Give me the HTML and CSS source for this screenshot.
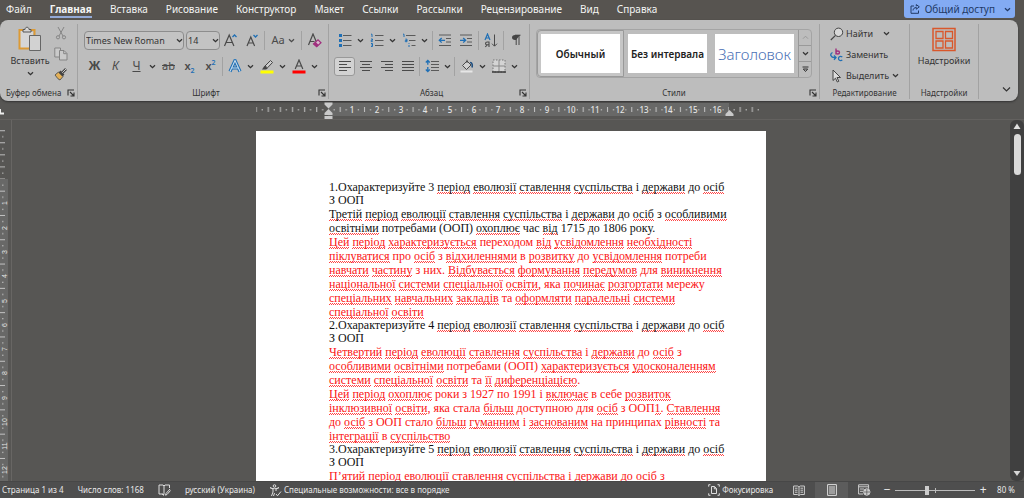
FILE: index.html
```html
<!DOCTYPE html>
<html lang="ru">
<head>
<meta charset="utf-8">
<meta name="viewport" content="width=device-width, initial-scale=1">
<title>Документ</title>
<link rel="stylesheet" href="styles.css">
</head>
<body class="app">
<svg class="defs" aria-hidden="true">
  <symbol id="chev" viewBox="0 0 7 7"><path d="M1 2.2 3.5 4.7 6 2.2" fill="none" stroke="currentColor" stroke-width="1.3"/></symbol>
  <symbol id="launch" viewBox="0 0 8 8"><path d="M1 6.5V1h6M3 3l3.5 3.5M7 3.5V7H3.5" fill="none" stroke="currentColor" stroke-width="1.1"/></symbol>
</svg>

<header class="tabbar">
  <nav class="tabs" aria-label="Вкладки ленты">
    <button class="tab">Файл</button>
    <button class="tab tab-active">Главная</button>
    <button class="tab">Вставка</button>
    <button class="tab">Рисование</button>
    <button class="tab">Конструктор</button>
    <button class="tab">Макет</button>
    <button class="tab">Ссылки</button>
    <button class="tab">Рассылки</button>
    <button class="tab">Рецензирование</button>
    <button class="tab">Вид</button>
    <button class="tab">Справка</button>
  </nav>
  <button class="share">
    <svg width="10" height="10" viewBox="0 0 10 10" fill="none" stroke="currentColor"><path d="M4 2H1v7.3h7.500V6.500M3 6.500C3.200 4.500 4.500 3.500 6.300 3.500V5.200L9.300 2.800 6.300.6v1.700"/></svg>
    <span>Общий доступ</span>
    <svg width="7" height="7"><use href="#chev"/></svg>
  </button>
</header>

<section class="ribbon" aria-label="Лента">
  <div class="group g-clip">
    <div class="clip-body">
      <button class="big">
        <svg width="24" height="26" viewBox="0 0 24 26"><path d="M6 4H1.500v18.500H11" fill="#d9d9d9" stroke="#dc9a35" stroke-width="2"/><path d="M12 4h4.500v5" fill="none" stroke="#dc9a35" stroke-width="2"/><path d="M3 6h12v4h-4v11H3z" fill="#d6d6d6"/><path d="M5 6V3.500h2C7 .5 11 .5 11 3.500h2V6z" fill="#d6d6d6" stroke="#555"/><path d="M11.500 9.500h11v15h-11z" fill="#d2d2d2" stroke="#666"/></svg>
        <span>Вставить</span>
        <svg width="7" height="7"><use href="#chev"/></svg>
      </button>
      <div class="clip-side">
        <button class="ic" aria-label="Вырезать"><svg width="12" height="14" viewBox="0 0 12 14" fill="none" stroke="#858585"><path d="M3 1l5 9M9 1 4 10"/><circle cx="3" cy="11.300" r="1.600"/><circle cx="9" cy="11.300" r="1.600"/></svg></button>
        <button class="ic" aria-label="Копировать"><svg width="14" height="14" viewBox="0 0 14 14" fill="#cacaca" stroke="#858585"><path d="M6 10H.8V1H6.500V3"/><path d="M5.500 3.500h4.500l3 3v6.500H5.500z"/><path d="M9.700 3.700v3h3" fill="none"/></svg></button>
        <button class="ic" aria-label="Формат по образцу"><svg width="14" height="14" viewBox="0 0 14 14"><path d="M1 8 4.500 5l4.500 4.500L6 13 4 11.800z" fill="#e3b058" stroke="#444" stroke-width=".8"/><path d="M5.500 4.500 9.500 8.500M8 6l4-4" stroke="#444" stroke-width="2.600"/><path d="M8.200 5.800 12 2" stroke="#ccc"/></svg></button>
      </div>
    </div>
    <footer class="foot"><span>Буфер обмена</span><button class="launch" aria-label="Параметры буфера обмена"><svg width="8" height="8"><use href="#launch"/></svg></button></footer>
  </div>

  <div class="group g-font">
    <div class="rows">
      <div class="row">
        <label class="combo combo-font"><select aria-label="Шрифт"><option>Times New Roman</option></select><svg width="7" height="7"><use href="#chev"/></svg></label>
        <label class="combo combo-size"><select aria-label="Размер"><option>14</option></select><svg width="7" height="7"><use href="#chev"/></svg></label>
        <button class="ib" aria-label="Увеличить размер"><svg width="16" height="14" viewBox="0 0 16 14" fill="none" stroke="#4a4a4a"><path d="M1.500 13 6.200 2l4.700 11M3 9.500h6.400" stroke-width="1.200"/><path d="M9.500 4 11.500 2l2 2" stroke="#1f6fb5" stroke-width="1.300"/></svg></button>
        <button class="ib" aria-label="Уменьшить размер"><svg width="16" height="14" viewBox="0 0 16 14" fill="none" stroke="#4a4a4a"><path d="M3 13 6.800 4l3.800 9M4.200 10h5.200" stroke-width="1.200"/><path d="M9.500 2 11.500 4l2-2" stroke="#1f6fb5" stroke-width="1.300"/></svg></button>
        <i class="sep"></i>
        <button class="ib wide">Aa<svg width="7" height="7"><use href="#chev"/></svg></button>
        <i class="sep"></i>
        <button class="ib" aria-label="Очистить формат"><svg width="16" height="15" viewBox="0 0 16 15" fill="none"><path d="M1.500 12 6 1l3.200 7.500M3 8.500h4.500" stroke="#4a4a4a" stroke-width="1.200"/><path d="M6.500 11 11 6.800l3 3-4.300 4z" fill="#d8bccd" stroke="#a02f7e" stroke-width="1.200"/><path d="M6.500 11 8.700 8.900l3 3-2 2z" fill="#a02f7e"/></svg></button>
      </div>
      <div class="row">
        <button class="ib bold">Ж</button>
        <button class="ib ital">К</button>
        <button class="ib undl">Ч</button>
        <button class="cv" aria-label="Вид подчёркивания"><svg width="7" height="7"><use href="#chev"/></svg></button>
        <button class="ib strike">ab</button>
        <button class="ib bold2"><span>x<sub>2</sub></span></button>
        <button class="ib bold2"><span>x<sup>2</sup></span></button>
        <i class="sep"></i>
        <button class="ib" aria-label="Текстовые эффекты"><svg width="14" height="14" viewBox="0 0 14 14" fill="none"><path d="M2 12.500 7 1.500l5 11M4.200 9h5.600" stroke="#1f6fb5" stroke-width="3.200"/><path d="M2 12.500 7 1.500l5 11M4.200 9h5.600" stroke="#c8dcec" stroke-width="1.100"/></svg></button>
        <button class="cv" aria-label="Варианты эффектов"><svg width="7" height="7"><use href="#chev"/></svg></button>
        <button class="ib" aria-label="Выделение цветом"><svg width="14" height="15" viewBox="0 0 14 15"><path d="M5 7 10.500 1.500 12.500 3.500 7.500 8.800z" fill="#ccc" stroke="#444"/><path d="M4.500 6.800 7.700 9.500 6 10.500H2z" fill="#444"/><path d="M.5 11.500h13v3H.5z" fill="#ff0"/></svg></button>
        <button class="cv" aria-label="Цвет выделения"><svg width="7" height="7"><use href="#chev"/></svg></button>
        <button class="ib" aria-label="Цвет текста"><svg width="14" height="15" viewBox="0 0 14 15" fill="none"><path d="M3.200 10 7 1l3.800 9M4.500 7h5" stroke="#4a4a4a" stroke-width="1.200"/><path d="M.5 11.500h13v3H.5z" fill="#f00"/></svg></button>
        <button class="cv" aria-label="Варианты цвета текста"><svg width="7" height="7"><use href="#chev"/></svg></button>
      </div>
    </div>
    <footer class="foot"><span>Шрифт</span><button class="launch" aria-label="Параметры шрифта"><svg width="8" height="8"><use href="#launch"/></svg></button></footer>
  </div>

  <div class="group g-para">
    <div class="rows">
      <div class="row">
        <button class="ib" aria-label="Маркеры"><svg width="14" height="14" viewBox="0 0 14 14"><path d="M5 2.500h8.500M5 7.500h8.500M5 12.500h8.500" stroke="#5a5a5a"/><path d="M1 1h3v3H1zM1 6h3v3H1zM1 11h3v3H1z" fill="#1f6fb5"/></svg></button>
        <button class="cv" aria-label="Вид маркеров"><svg width="7" height="7"><use href="#chev"/></svg></button>
        <button class="ib" aria-label="Нумерация"><svg width="14" height="14" viewBox="0 0 14 14" fill="none"><path d="M5 2.500h8.500M5 7.500h8.500M5 12.500h8.500" stroke="#5a5a5a"/><path d="M1 1.200h1V4M1 6h1.500v1.300H1.200v1.300h1.500M1 10.500h1.500v3H1M1.300 12h1" stroke="#1f6fb5"/></svg></button>
        <button class="cv" aria-label="Вид нумерации"><svg width="7" height="7"><use href="#chev"/></svg></button>
        <button class="ib" aria-label="Многоуровневый список"><svg width="14" height="14" viewBox="0 0 14 14" fill="none"><path d="M4 2.500h9.500M7 7.500h6.500M9.500 12.500h4" stroke="#5a5a5a"/><path d="M1 1.200h1V4M3.300 6.200h1.700v2.500H3.300V7.500H5M7 10.200v.8M7 12v2" stroke="#1f6fb5"/></svg></button>
        <button class="cv" aria-label="Вид списка"><svg width="7" height="7"><use href="#chev"/></svg></button>
        <i class="sep"></i>
        <button class="ib" aria-label="Уменьшить отступ"><svg width="14" height="14" viewBox="0 0 14 14" fill="none"><path d="M1 2h12M8 5.500h5M8 9h5M1 12.500h12" stroke="#5a5a5a"/><path d="M7 7.300H1.500M3.700 5 1.300 7.300l2.400 2.300" stroke="#1f6fb5" stroke-width="1.300"/></svg></button>
        <button class="ib" aria-label="Увеличить отступ"><svg width="14" height="14" viewBox="0 0 14 14" fill="none"><path d="M1 2h12M8 5.500h5M8 9h5M1 12.500h12" stroke="#5a5a5a"/><path d="M1 7.300h5.500M4.200 5l2.400 2.300-2.400 2.300" stroke="#1f6fb5" stroke-width="1.300"/></svg></button>
        <i class="sep"></i>
        <button class="ib" aria-label="Сортировка"><svg width="14" height="15" viewBox="0 0 14 15" fill="none"><path d="M1 7 3.500 1 6 7M2 5h3" stroke="#1f6fb5" stroke-width="1.200"/><path d="M5 14V9H3.200C1 9 1 11.800 3.200 11.800H5M3.200 11.800 1.300 14" stroke="#4a4a4a" stroke-width="1.100"/><path d="M10.500 1.500v11.500M8 10.700l2.500 2.500 2.500-2.500" stroke="#4a4a4a"/></svg></button>
        <i class="sep"></i>
        <button class="ib" aria-label="Знаки абзаца"><svg width="10" height="12" viewBox="0 0 10 12"><path d="M9 1H4C0 1 0 6 4 6h1" fill="#444"/><path d="M5.200 1v10M8 1v10M4 1.200h5.500" stroke="#444"/></svg></button>
      </div>
      <div class="row">
        <button class="ib pressed" aria-label="По левому краю"><svg width="12" height="12" viewBox="0 0 12 12" stroke="#4a4a4a"><path d="M0 1.500h12M0 4.500h8M0 7.500h12M0 10.500h8"/></svg></button>
        <button class="ib" aria-label="По центру"><svg width="12" height="12" viewBox="0 0 12 12" stroke="#4a4a4a"><path d="M0 1.500h12M2 4.500h8M0 7.500h12M2 10.500h8"/></svg></button>
        <button class="ib" aria-label="По правому краю"><svg width="12" height="12" viewBox="0 0 12 12" stroke="#4a4a4a"><path d="M0 1.500h12M4 4.500h8M0 7.500h12M4 10.500h8"/></svg></button>
        <button class="ib" aria-label="По ширине"><svg width="12" height="12" viewBox="0 0 12 12" stroke="#4a4a4a"><path d="M0 1.500h12M0 4.500h12M0 7.500h12M0 10.500h12"/></svg></button>
        <i class="sep"></i>
        <button class="ib" aria-label="Интервал"><svg width="14" height="14" viewBox="0 0 14 14" fill="none"><path d="M6 2.500h8M6 5.500h8M6 8.500h8M6 11.500h8" stroke="#5a5a5a"/><path d="M2.800 1.500v4.300M2.800 8v4.500M.8 3.500l2-2 2 2M.8 10.500l2 2 2-2" stroke="#1f6fb5" stroke-width="1.300"/></svg></button>
        <button class="cv" aria-label="Варианты интервала"><svg width="7" height="7"><use href="#chev"/></svg></button>
        <i class="sep"></i>
        <button class="ib" aria-label="Заливка"><svg width="14" height="14" viewBox="0 0 14 14"><path d="M2.500 6.500 7 2l4 4-4.500 4.500z" fill="#d0d0d0" stroke="#4a4a4a"/><path d="M7 4V.8" stroke="#4a4a4a"/><path d="M10 3.500c2.500 0 2.500 3 2 5" fill="none" stroke="#1f4f80" stroke-width="1.600"/><path d="M.5 11.500h12v2H.5z" fill="#e6e6e6"/></svg></button>
        <button class="cv" aria-label="Цвет заливки"><svg width="7" height="7"><use href="#chev"/></svg></button>
        <button class="ib" aria-label="Границы"><svg width="14" height="14" viewBox="0 0 14 14" fill="none"><path d="M1 1h12v12H1z" fill="#d4d4d4" stroke="#777" stroke-dasharray="1.500 1.500"/><path d="M7 1v12M1 7h12" stroke="#888"/><path d="M0 13h14" stroke="#333" stroke-width="1.400"/></svg></button>
        <button class="cv" aria-label="Виды границ"><svg width="7" height="7"><use href="#chev"/></svg></button>
      </div>
    </div>
    <footer class="foot"><span>Абзац</span><button class="launch" aria-label="Параметры абзаца"><svg width="8" height="8"><use href="#launch"/></svg></button></footer>
  </div>

  <div class="group g-style">
    <div class="gallery">
      <button class="style style-on"><span>Обычный</span></button>
      <button class="style"><span>Без интервала</span></button>
      <button class="style style-head"><span>Заголовок</span></button>
      <div class="gal-nav">
        <button aria-label="Вверх" class="nav-off"><svg width="7" height="7" viewBox="0 0 7 7"><path d="M1 4.700 3.500 2.200 6 4.700" fill="none" stroke="currentColor"/></svg></button>
        <button aria-label="Вниз"><svg width="7" height="7"><use href="#chev"/></svg></button>
        <button aria-label="Все стили"><svg width="7" height="7" viewBox="0 0 7 7"><path d="M.5 1h6M1.300 3h4.400L3.500 5.500z" fill="none" stroke="currentColor"/></svg></button>
      </div>
    </div>
    <footer class="foot"><span>Стили</span><button class="launch" aria-label="Панель стилей"><svg width="8" height="8"><use href="#launch"/></svg></button></footer>
  </div>

  <div class="group g-edit">
    <div class="edit">
      <button class="line"><svg width="14" height="14" viewBox="0 0 14 14"><circle cx="8.500" cy="5.300" r="4.200" fill="#d8d8d8" stroke="#444"/><path d="M5.500 8.300.8 13" stroke="#444" stroke-width="1.200"/></svg>Найти<svg class="far" width="7" height="7"><use href="#chev"/></svg></button>
      <button class="line"><svg width="14" height="14" viewBox="0 0 14 14" fill="none"><path d="M6 .5v6M6 4.500C6 2.500 9.500 2.500 9.500 4.500S6 6.500 6 4.500" stroke="#a02f7e" stroke-width="1.400"/><path d="M12.300 8.800C9.500 7.500 8.500 9.300 8.500 10.500s1.300 2.800 3.800 1.700M2.500 4.500C-.5 6 .5 10 5.500 9.500M4 7.500l2 2-2 2.300" stroke="#1f6fb5" stroke-width="1.300"/></svg>Заменить</button>
      <button class="line"><svg width="14" height="14" viewBox="0 0 14 14"><path d="M3 1v10.500l2.500-2.300L7.300 13l1.500-.7L7 8.500h3.500z" fill="#ddd" stroke="#444"/></svg>Выделить<svg class="near" width="7" height="7"><use href="#chev"/></svg></button>
    </div>
    <footer class="foot"><span>Редактирование</span></footer>
  </div>

  <div class="group g-add">
    <button class="big">
      <svg width="24" height="25" viewBox="0 0 24 25" fill="none" stroke="#d9572b"><path d="M1 1.500h22v22H1z" stroke-width="1.500"/><path d="M4 4.500h7v7H4zM13.500 4.500h7v7h-7zM4 14h7v7H4zM13.500 14h7v7h-7z" stroke-width="1.300"/></svg>
      <span>Надстройки</span>
    </button>
    <footer class="foot"><span>Надстройки</span></footer>
  </div>
  <button class="collapse" aria-label="Свернуть ленту"><svg width="9" height="7" viewBox="0 0 9 7"><path d="M1 1.500 4.500 5 8 1.500" fill="none" stroke="currentColor" stroke-width="1.200"/></svg></button>
</section>

<div class="hruler">
  <svg class="corner" width="5" height="8" viewBox="0 0 5 8"><path d="M0 6.500h4M0 2v5" stroke="#eee" stroke-width="2"/></svg>
  <svg class="hscale" width="510" height="18" viewBox="0 0 510 18">
    <defs><pattern id="tk" x="72" width="24.3" height="18" patternUnits="userSpaceOnUse"><path d="M6.100 8v1.500M18.200 8v1.500M12.200 6v5" stroke="#c4c4c4"/></pattern>
    <pattern id="tl" x="-.5" width="12.100" height="18" patternUnits="userSpaceOnUse"><path d="M.7 6v5M6.700 8v1.500" stroke="#c4c4c4"/></pattern></defs>
    <path d="M72 2h401v13H72z" fill="#686867"/>
    <path d="M0 0h68v18H0z" fill="url(#tl)"/><path d="M72 0h401v18H72z" fill="url(#tk)"/><path d="M476 0h30v18h-30z" fill="url(#tl)"/>
    <g class="nums"><text x="96" y="12">1</text><text x="121" y="12">2</text><text x="145" y="12">3</text><text x="169" y="12">4</text><text x="194" y="12">5</text><text x="218" y="12">6</text><text x="242" y="12">7</text><text x="266" y="12">8</text><text x="291" y="12">9</text><text x="315" y="12">10</text><text x="339" y="12">11</text><text x="364" y="12">12</text><text x="388" y="12">13</text><text x="412" y="12">14</text><text x="437" y="12">15</text><text x="461" y="12">16</text></g>
    <path d="M68.500 1.500h8v2l-4 4-4-4zM68.500 14v-2l4-4 4 4v2zM68.500 15h8v3h-8zM469.500 15v-2l4-4 4 4v2z" fill="#c9c9c9"/>
  </svg>
</div>

<main class="work">
  <div class="vruler">
    <svg width="11" height="361" viewBox="0 0 11 361">
      <defs><pattern id="vt" y="59" width="8" height="24.3" patternUnits="userSpaceOnUse"><path d="M2 6.100h1.500M2 18.200h1.500M0 12.200h5" stroke="#c4c4c4"/></pattern>
      <pattern id="vl" y="10" width="8" height="12.100" patternUnits="userSpaceOnUse"><path d="M0 .7h5M2 6.700h1.500" stroke="#c4c4c4"/></pattern></defs>
      <path d="M0 59h8v302H0z" fill="#686867"/>
      <path d="M0 10h8v49H0z" fill="url(#vl)"/><path d="M0 59h8v302H0z" fill="url(#vt)"/>
      <g class="nums vnums"><text transform="translate(7 83) rotate(-90)">1</text><text transform="translate(7 108) rotate(-90)">2</text><text transform="translate(7 132) rotate(-90)">3</text><text transform="translate(7 156) rotate(-90)">4</text><text transform="translate(7 181) rotate(-90)">5</text><text transform="translate(7 205) rotate(-90)">6</text><text transform="translate(7 229) rotate(-90)">7</text><text transform="translate(7 253) rotate(-90)">8</text><text transform="translate(7 278) rotate(-90)">9</text><text transform="translate(7 302) rotate(-90)">10</text><text transform="translate(7 326) rotate(-90)">11</text><text transform="translate(7 350) rotate(-90)">12</text></g>
    </svg>
  </div>
  <div class="canvas">
    <article class="paper" lang="uk">
      <p class="q">1.Охарактеризуйте 3 <u>період</u> <u>еволюзії</u> <u>ставлення</u> <u>суспільства</u> і <u>держави</u> до <u>осіб</u><br>З ООП</p>
      <p><u>Третій</u> <u>період</u> <u>еволюції</u> <u>ставлення</u> <u>суспільства</u> і <u>держави</u> до <u>осіб</u> з <u>особливими</u><br><u>освітніми</u> потребами (ООП) <u>охоплює</u> час <u>від</u> 1715 до 1806 року.</p>
      <p class="red"><u>Цей</u> <u>період</u> <u>характеризується</u> переходом <u>від</u> <u>усвідомлення</u> <u>необхідності</u><br><u>піклуватися</u> про <u>осіб</u> з <u>відхиленнями</u> в <u>розвитку</u> до <u>усвідомлення</u> потреби<br><u>навчати</u> <u>частину</u> з них. <u>Відбувається</u> <u>формування</u> <u>передумов</u> для <u>виникнення</u><br><u>національної</u> <u>системи</u> <u>спеціальної</u> <u>освіти</u>, яка <u>починає</u> <u>розгортати</u> мережу<br><u>спеціальних</u> <u>навчальних</u> <u>закладів</u> та <u>оформляти</u> <u>паралельні</u> <u>системи</u><br><u>спеціальної</u> <u>освіти</u></p>
      <p class="q">2.Охарактеризуйте 4 <u>період</u> <u>еволюзії</u> <u>ставлення</u> <u>суспільства</u> і <u>держави</u> до <u>осіб</u><br>З ООП</p>
      <p class="red"><u>Четвертий</u> <u>період</u> <u>еволюції</u> <u>ставлення</u> <u>суспільства</u> і <u>держави</u> до <u>осіб</u> з<br><u>особливими</u> <u>освітніми</u> потребами (ООП) <u>характеризується</u> <u>удосконаленням</u><br><u>системи</u> <u>спеціальної</u> <u>освіти</u> та <u>її</u> <u>диференціацією</u>.</p>
      <p class="red"><u>Цей</u> <u>період</u> <u>охоплює</u> роки з 1927 по 1991 і <u>включає</u> в себе <u>розвиток</u><br><u>інклюзивної</u> <u>освіти</u>, яка стала <u>більш</u> доступною для <u>осіб</u> з ООП<u>1</u>. <u>Ставлення</u><br>до <u>осіб</u> з ООП стало <u>більш</u> <u>гуманним</u> і <u>заснованим</u> на принципах <u>рівності</u> та<br><u>інтеграції</u> в <u>суспільство</u></p>
      <p class="q">3.Охарактеризуйте 5 <u>період</u> <u>еволюзії</u> <u>ставлення</u> <u>суспільства</u> і <u>держави</u> до <u>осіб</u><br>З ООП</p>
      <p class="red"><u>П’ятий</u> <u>період</u> <u>еволюції</u> <u>ставлення</u> <u>суспільства</u> і <u>держави</u> до <u>осіб</u> з</p>
    </article>
  </div>
  <div class="scroll">
    <button aria-label="Прокрутить вверх"><svg width="8" height="7" viewBox="0 0 8 7"><path d="M4 .5 7.500 6h-7z" fill="#e0e0e0"/></svg></button>
    <div class="thumb"></div>
    <button class="down" aria-label="Прокрутить вниз"><svg width="8" height="7" viewBox="0 0 8 7"><path d="M4 6 .5 1h7z" fill="#d6d6d6"/></svg></button>
  </div>
</main>

<footer class="status">
  <button class="st">Страница 1 из 4</button>
  <button class="st st-words">Число слов: 1168</button>
  <button class="st" aria-label="Правописание"><svg width="13" height="12" viewBox="0 0 13 12" fill="none" stroke="#ddd"><path d="M6 10.500V2L5 1H1v9h4l1 1M6 2l1-1h4.500v3M12 5 8 9.500l-.5 1.700L9 10.500 12.500 6.500M4 10l2 1.500"/></svg></button>
  <button class="st">русский (Украина)</button>
  <button class="st st-acc"><svg width="13" height="13" viewBox="0 0 13 13" fill="none" stroke="#ddd"><circle cx="5.500" cy="2" r="1.300"/><path d="M1 3.500 4 5v3l-1.500 4M10 3.500 7 5v2M1 3.500c1 1.500 8 1.500 9 0M4.500 12l1-3M7 10l1.500 1.800L12 7.500"/></svg>Специальные возможности: все в порядке</button>
  <div class="st-right">
    <button class="st st-focus"><svg width="12" height="12" viewBox="0 0 12 12" fill="none" stroke="#ddd"><path d="M2.500.7H.7v2M9.500.7h1.800v2M2.500 11.300H.7v-2M9.500 11.300h1.800v-2M3.500 2.500h3l2 2v5h-5zM6.300 2.500v2.300h2.200"/></svg>Фокусировка</button>
    <button class="view" aria-label="Режим чтения"><svg width="12" height="11" viewBox="0 0 12 11" fill="none" stroke="#ccc"><path d="M6 2v8.500M.6 1h4L6 2l1.400-1h4v8.500H7.400L6 10.500 4.600 9.500h-4zM2 3.200h2.500M2 5.200h2.500M2 7.200h2.500M7.500 3.200H10M7.500 5.200H10M7.500 7.200H10"/></svg></button>
    <button class="view view-on" aria-label="Разметка страницы"><svg width="10" height="12" viewBox="0 0 10 12" fill="none" stroke="#ddd"><path d="M.6.600h8.800v10.800H.6zM2 3h6M2 5h6M2 7h6M2 9h6"/></svg></button>
    <button class="view" aria-label="Веб-документ"><svg width="13" height="12" viewBox="0 0 13 12" fill="none" stroke="#ccc"><path d="M5 10H.6V.800h10v4M.6 2.800h10M2 5h4M2 7.300h3"/><circle cx="8.800" cy="8" r="3.200" fill="#ccc"/><path d="M5.600 8H12M8.800 5v6" stroke="#555" stroke-width=".7"/></svg></button>
    <button class="zb" aria-label="Уменьшить масштаб">−</button>
    <input class="zoom" type="range" min="0" max="100" value="39" aria-label="Масштаб">
    <button class="zb" aria-label="Увеличить масштаб">+</button>
    <button class="st pct">80 %</button>
  </div>
</footer>
</body>
</html>
```
FILE: styles.css
```css
* { box-sizing: border-box; }

.app {
  margin: 0;
  height: 100vh;
  display: flex;
  flex-direction: column;
  overflow: hidden;
  background: #575654;
  color: #333;
  font-family: "Noto Sans", "Open Sans", sans-serif;
  font-size: 10px;
}

.defs { position: absolute; width: 0; height: 0; }

button, select, input { font: inherit; color: inherit; margin: 0; }
button { padding: 0; border: 0; background: none; white-space: nowrap; }
svg { flex: none; display: block; }

/* Tabs */
.tabbar { display: flex; justify-content: space-between; align-items: flex-start; height: 20px; padding: 0 9px 0 6px; background: #575450; flex: none; }
.tabs { display: flex; gap: 18px; }
.tab { height: 18px; font-size: 10px; line-height: 16px; color: #f4f4f4; border-bottom: 2px solid transparent; display: flex; align-items: center; padding-top: 2px; }
.tab-active { font-weight: 700; border-bottom-color: #93a9d6; }
.share { display: flex; align-items: center; gap: 5px; height: 18px; padding: 0 4px 0 6px; background: #83abf3; border-radius: 0 0 3px 3px; font-size: 10px; color: #223a66; }
.share svg:last-child { margin-left: 4px; }

/* Ribbon */
.ribbon { display: flex; flex: none; height: 81px; margin-right: 6px; padding: 4px 0 2px; background: #bdbdbd; border-radius: 8px; box-shadow: 0 1px 2px #333; }
.group { display: flex; flex-direction: column; justify-content: space-between; border-right: 1px solid #a2a2a2; flex: none; }
.foot { position: relative; display: flex; justify-content: center; height: 13px; line-height: 13px; font-size: 8px; color: #333; }
.launch { position: absolute; right: 2px; top: 3px; color: #333; }
.g-clip { width: 78px; }
.g-clip .foot { justify-content: flex-start; padding-left: 6px; }
.g-font { width: 251px; padding-left: 6px; }
.g-para { width: 201px; padding-left: 5px; }
.g-style { width: 290px; padding: 0 7px 0 6px; }
.g-edit { width: 90px; }
.g-add { width: 69px; }
.g-style .launch { right: -5px; }

.clip-body { display: flex; padding-left: 6px; }
.big { display: flex; flex-direction: column; align-items: center; font-size: 9px; line-height: 14px; padding-top: 2px; }
.clip-body .big { width: 48px; gap: 2px; }
.g-add .big { padding-top: 3px; gap: 2px; }
.clip-side { display: flex; flex-direction: column; justify-content: space-between; padding: 2px 0; height: 59px; }
.ic { width: 14px; height: 14px; display: flex; justify-content: center; }

.rows { display: flex; flex-direction: column; gap: 6px; padding-top: 6px; }
.row { display: flex; align-items: center; height: 20px; }
.ib { display: flex; align-items: center; justify-content: center; width: 21px; height: 19px; font-size: 12px; color: #4a4a4a; line-height: 16px; }
.cv { display: flex; align-items: center; justify-content: center; width: 11px; height: 19px; }
.wide { width: 32px; gap: 3px; font-size: 11px; }
.sep { width: 1px; height: 19px; margin: 0 1px; background: #a2a2a2; flex: none; }
.bold { font-weight: 700; }
.bold2 { font-weight: 600; font-size: 11px; }
.bold2 sub, .bold2 sup { font-size: 7px; line-height: 0; color: #1f6fb5; }
.ital { font-style: italic; }
.undl { text-decoration: underline; }
.strike { text-decoration: line-through; font-size: 11px; }
.pressed { background: #d2d2d2; border: 1px solid #999; border-radius: 3px; }
.g-font .row:first-child .sep { margin: 0 2px; }
.g-para .row:first-child .sep { margin: 0 1px 0 2px; }

.combo { position: relative; display: flex; height: 19px; margin-right: 2px; }
.combo select { appearance: none; width: 100%; padding: 0 10px 0 1px; border: 1px solid #8d8d8d; border-radius: 4px; background: #c3c3c3; font-size: 9px; color: #333; }
.combo svg { position: absolute; right: 1px; top: 6px; }
.combo-font { width: 100px; }
.combo-size { width: 34px; margin-right: 0; }

.gallery { display: flex; height: 49px; margin-top: 5px; border: 1px solid #a4a4a4; border-radius: 4px; overflow: hidden; }
.style { display: flex; flex: 1; min-width: 0; padding: 3px; border: 1px solid transparent; }
.style span { flex: 1; display: flex; align-items: center; justify-content: center; background: #fff; font-size: 10px; font-weight: 600; color: #222; }
.style-on { border: 1px solid #999; border-radius: 4px 0 0 4px; background: #c6c6c6; }
.style-head span { font-size: 15px; font-weight: 300; color: #4a70b5; }
.gal-nav { display: flex; flex-direction: column; width: 13px; border-left: 1px solid #999; }
.gal-nav button { flex: 1; display: flex; align-items: center; justify-content: center; }
.gal-nav button + button { border-top: 1px solid #999; }
.nav-off { color: #999; }

.edit { display: flex; flex-direction: column; gap: 4px; padding: 1px 0 0 10px; }
.line { display: flex; align-items: center; gap: 2px; height: 17px; font-size: 9px; }
.far { margin-left: 8px; }
.near { margin-left: 1px; }
.collapse { margin: auto 7px 6px auto; }

/* Rulers */
.hruler { position: relative; display: flex; justify-content: center; flex: none; height: 19px; border-bottom: 1px solid #63615f; padding-right: 2px; }
.corner { position: absolute; left: 0; top: 6px; }
.nums { font-size: 8px; font-weight: 500; fill: #e4e4e4; text-anchor: middle; paint-order: stroke; stroke: #686867; stroke-width: 2px; }
.vnums { font-family: "Liberation Sans", Arial, sans-serif; font-size: 7px; }
.work { display: flex; flex: 1; min-height: 0; }
.vruler { width: 12px; border-right: 1px solid #686664; flex: none; }

/* Page */
.canvas { flex: 1; display: flex; justify-content: center; padding-top: 11px; overflow: hidden; }
.paper { width: 510px; height: 1000px; flex: none; padding: 50px 36px 0 73px; background: #fff; font-family: "Liberation Serif", "Times New Roman", serif; font-size: 12px; line-height: 14px; color: #111; white-space: nowrap; }
.paper p { margin: 0; }
.paper .q { line-height: 13px; }
.paper .red { color: #fb1414; }
.paper u {
  text-decoration: none;
  background:
    linear-gradient(90deg, #f44 1px, transparent 1px) 0 100% / 2px 1px repeat-x,
    linear-gradient(90deg, transparent 1px, #f44 1px) 0 calc(100% - 1px) / 2px 1px repeat-x;
}

.scroll { display: flex; flex-direction: column; align-items: center; width: 14px; flex: none; padding: 3px 0 4px; background: #404040; border-radius: 6px; }
.thumb { width: 7px; height: 41px; margin-top: 4px; border-radius: 4px; background: #d9d9d9; }
.down { margin-top: auto; }

/* Status bar */
.status { display: flex; align-items: center; flex: none; height: 17px; padding: 0 9px 0 2px; background: #4e4e4e; border-top: 1px solid #474747; color: #e8e8e8; font-size: 8px; gap: 14px; }
.st { display: flex; align-items: center; gap: 2px; line-height: 14px; }
.st-right { display: flex; align-items: center; margin-left: auto; height: 100%; }
.st-focus { margin-right: 9px; }
.view { display: flex; align-items: center; justify-content: center; width: 33px; height: 100%; }
.view-on { background: #5c5c5c; }
.zb { width: 12px; font-size: 12px; line-height: 14px; }
.zoom { appearance: none; width: 80px; height: 10px; margin: 0 2px; background: linear-gradient(#bbb, #bbb) 0 5px / 100% 1px no-repeat, linear-gradient(#bbb, #bbb) 50% 3px / 1px 5px no-repeat; }
.zoom::-webkit-slider-thumb { appearance: none; width: 4px; height: 9px; background: #ccc; }
.pct { margin-left: 8px; }
```
